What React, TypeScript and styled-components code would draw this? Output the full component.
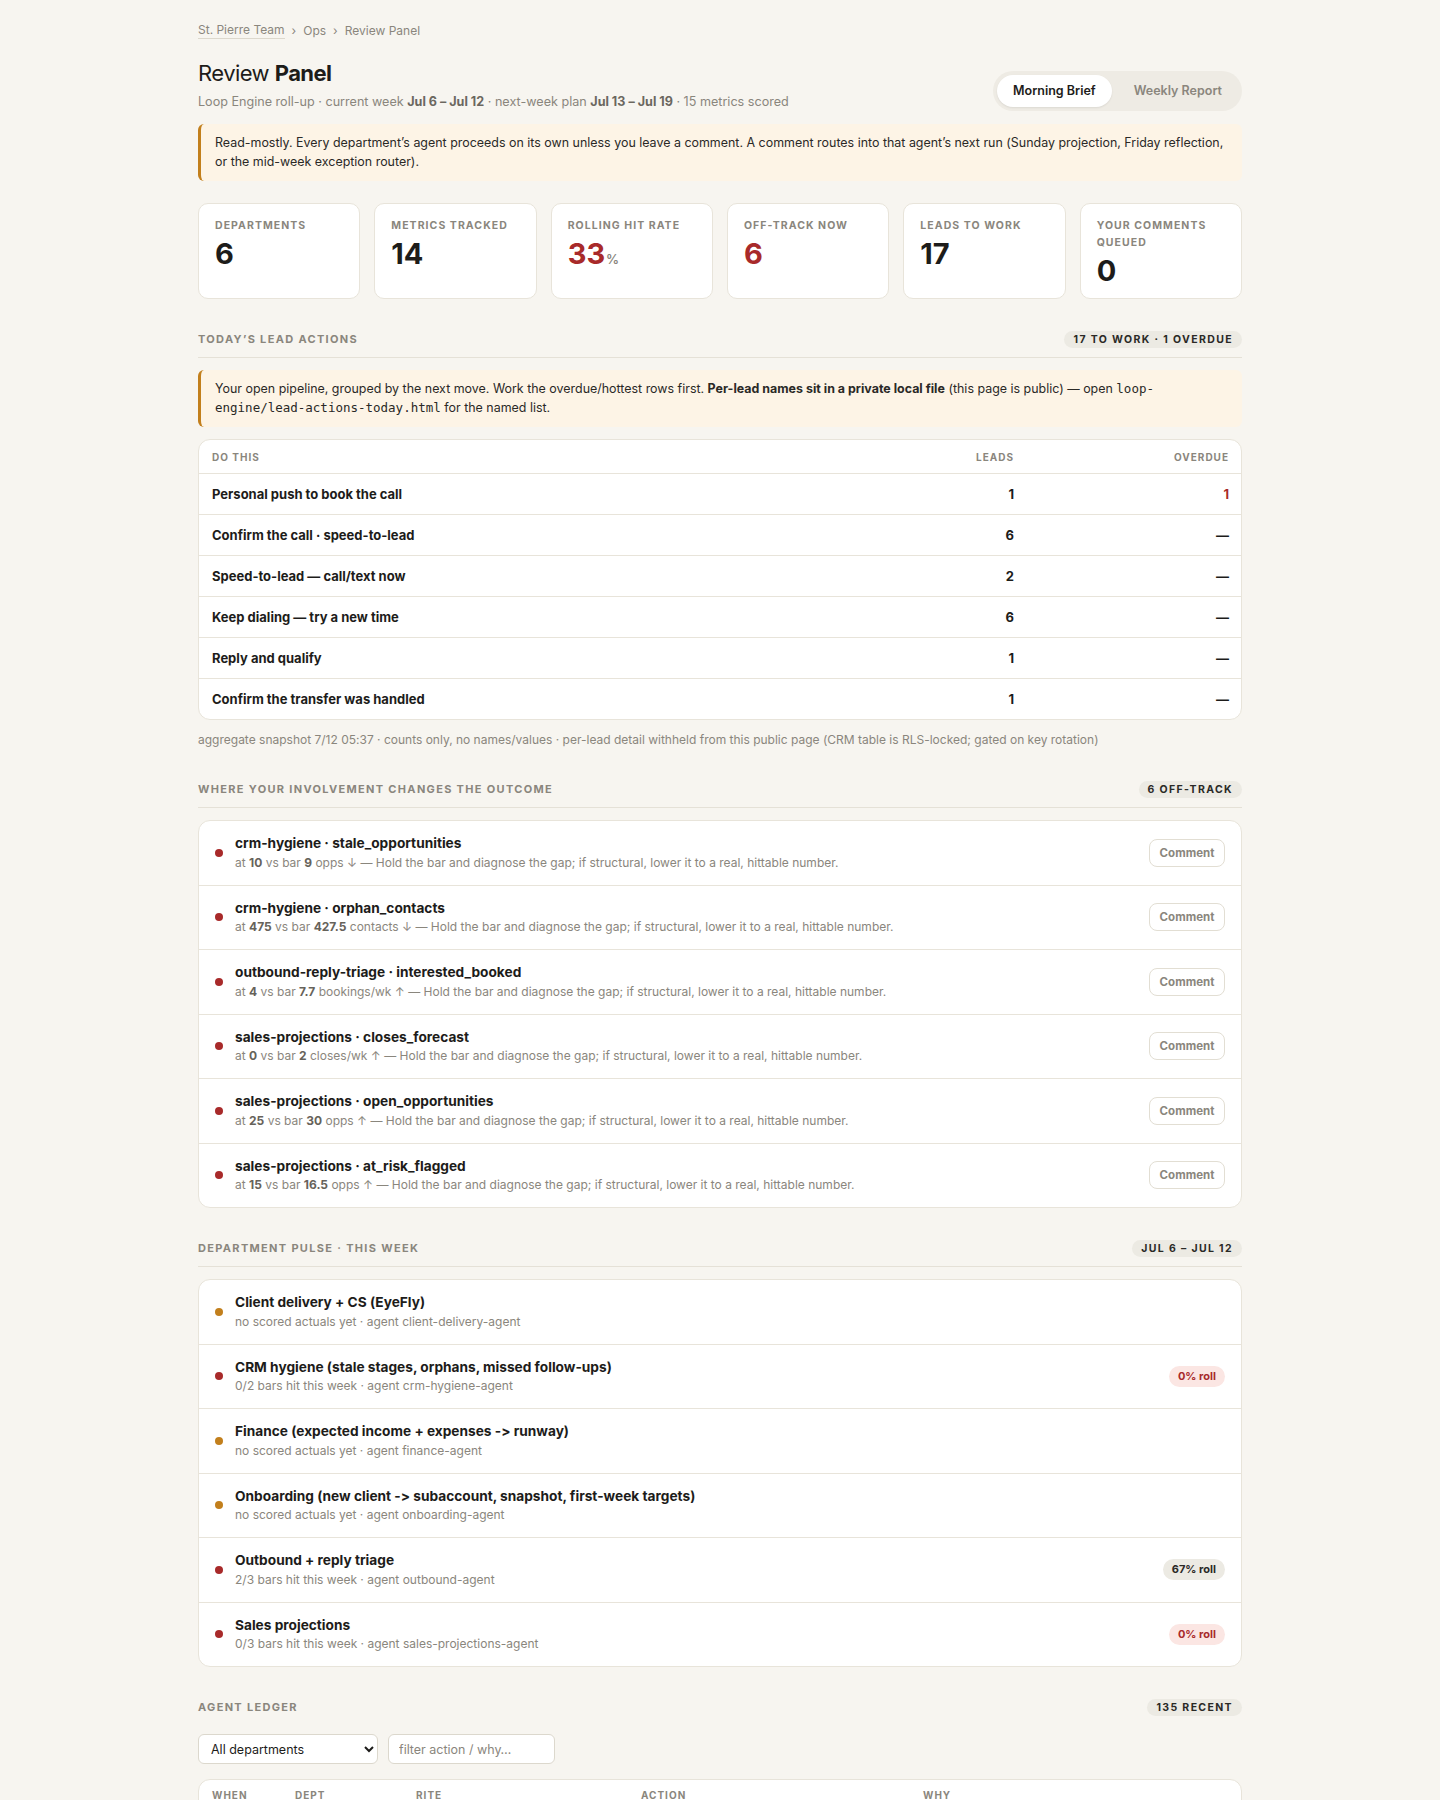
import React from "react";
import styled, { createGlobalStyle } from "styled-components";

const INK = "#1d1c1a";
const MUTED = "#8a867d";
const LINE = "#e8e4da";
const RED = "#a82a2a";
const AMBER = "#c27f1c";

const GlobalStyle = createGlobalStyle`
  body {
    margin: 0;
    background: #f7f5f0;
    color: ${INK};
    font-family: Inter, "Noto Sans", "Liberation Sans", sans-serif;
    font-feature-settings: "calt" 0;
    -webkit-font-smoothing: antialiased;
  }
`;

const Page = styled.div`
  max-width: 1044px;
  margin: 0 auto;
  padding: 22px 0 80px;
`;

const Crumbs = styled.nav`
  display: flex;
  align-items: center;
  gap: 7px;
  font-size: 12px;
  line-height: 16px;
  color: ${MUTED};
`;

const CrumbLink = styled.span`
  border-bottom: 1px solid #dcd8cd;
`;

const HeaderRow = styled.header`
  display: flex;
  align-items: flex-end;
  justify-content: space-between;
  margin-top: 20px;
`;

const Title = styled.h1`
  margin: 0;
  font-size: 22px;
  line-height: 28px;
  font-weight: 400;
  letter-spacing: -0.025em;

  b {
    font-weight: 700;
  }
`;

const Subtitle = styled.p`
  margin: 6px 0 0;
  font-size: 12.6px;
  line-height: 18px;
  color: ${MUTED};

  b {
    color: #6b675f;
    font-weight: 700;
  }
`;

const Toggle = styled.div`
  display: flex;
  gap: 6px;
  padding: 4px;
  background: #eeebe4;
  border-radius: 999px;
`;

const ToggleBtn = styled.button<{ $active?: boolean }>`
  border: 0;
  font: inherit;
  font-size: 12.5px;
  font-weight: 600;
  line-height: 18px;
  padding: 7px 16px;
  border-radius: 999px;
  cursor: pointer;
  color: ${(p) => (p.$active ? INK : MUTED)};
  background: ${(p) => (p.$active ? "#fff" : "transparent")};
  box-shadow: ${(p) => (p.$active ? "0 1px 2px rgba(0,0,0,0.08)" : "none")};
`;

const Callout = styled.div<{ $top?: number }>`
  margin-top: ${(p) => p.$top ?? 0}px;
  padding: 10px 14px;
  background: #fdf4e6;
  border-left: 3px solid ${AMBER};
  border-radius: 6px;
  font-size: 12.45px;
  line-height: 18.5px;
  color: #2a2926;

  b {
    font-weight: 700;
  }

  code {
    font-family: "DejaVu Sans Mono", "Liberation Mono", monospace;
    font-size: 12.5px;
  }
`;

const StatGrid = styled.div`
  display: grid;
  grid-template-columns: repeat(6, 1fr);
  gap: 14px;
  margin-top: 22px;
`;

const StatCard = styled.div`
  background: #fff;
  border: 1px solid ${LINE};
  border-radius: 10px;
  padding: 13px 16px 12px;
`;

const StatLabel = styled.div`
  font-size: 10.5px;
  line-height: 17px;
  font-weight: 700;
  letter-spacing: 0.1em;
  text-transform: uppercase;
  color: ${MUTED};
`;

const StatValue = styled.div<{ $alert?: boolean }>`
  margin-top: 4px;
  font-size: 29px;
  line-height: 31px;
  font-weight: 700;
  color: ${(p) => (p.$alert ? RED : INK)};

  small {
    font-size: 13px;
    font-weight: 600;
    color: ${MUTED};
    margin-left: 1px;
  }
`;

const Section = styled.section`
  margin-top: 32px;
`;

const SectionHead = styled.div<{ $flat?: boolean }>`
  display: flex;
  align-items: center;
  justify-content: space-between;
  padding-bottom: ${(p) => (p.$flat ? 0 : 9)}px;
  border-bottom: ${(p) => (p.$flat ? "none" : "1px solid #e5e1d7")};
  margin-bottom: ${(p) => (p.$flat ? 18 : 12)}px;
`;

const SectionTitle = styled.h2`
  margin: 0;
  font-size: 11px;
  line-height: 17px;
  font-weight: 700;
  letter-spacing: 0.12em;
  text-transform: uppercase;
  color: ${MUTED};
`;

const Badge = styled.span`
  font-size: 10.5px;
  line-height: 17px;
  font-weight: 700;
  letter-spacing: 0.13em;
  text-transform: uppercase;
  color: #2a2926;
  background: #eceae3;
  border-radius: 999px;
  padding: 0 9px;
`;

const Card = styled.div<{ $top?: number }>`
  margin-top: ${(p) => p.$top ?? 0}px;
  background: #fff;
  border: 1px solid ${LINE};
  border-radius: 12px;
  overflow: hidden;
`;

const LeadGrid = styled.div<{ $head?: boolean }>`
  display: grid;
  grid-template-columns: 1fr 140px 215px;
  align-items: center;
  padding: 0 12px 0 13px;
  height: ${(p) => (p.$head ? 33 : 40)}px;
  border-top: ${(p) => (p.$head ? "none" : `1px solid ${LINE}`)};
  font-size: ${(p) => (p.$head ? "10px" : "13px")};
  font-weight: 700;
  letter-spacing: ${(p) => (p.$head ? "0.1em" : "0")};
  text-transform: ${(p) => (p.$head ? "uppercase" : "none")};
  color: ${(p) => (p.$head ? MUTED : INK)};
`;

const Num = styled.span<{ $alert?: boolean }>`
  text-align: right;
  color: ${(p) => (p.$alert ? RED : "inherit")};
`;

const Footnote = styled.p`
  margin: 11px 0 0;
  font-size: 12px;
  line-height: 18px;
  color: ${MUTED};
`;

const ItemRow = styled.div`
  display: flex;
  align-items: center;
  gap: 12px;
  padding: 13px 16px;
  border-top: 1px solid ${LINE};

  &:first-child {
    border-top: none;
  }
`;

const Dot = styled.span<{ $tone: "red" | "amber" }>`
  flex: none;
  width: 8px;
  height: 8px;
  border-radius: 50%;
  background: ${(p) => (p.$tone === "red" ? RED : AMBER)};
`;

const ItemBody = styled.div`
  flex: 1;
  min-width: 0;
`;

const ItemTitle = styled.div`
  font-size: 13.7px;
  line-height: 19.5px;
  font-weight: 700;
  color: ${INK};
`;

const ItemSub = styled.div`
  font-size: 12px;
  line-height: 18px;
  color: ${MUTED};

  b {
    font-weight: 700;
    color: #66625a;
  }
`;

const CommentBtn = styled.button`
  flex: none;
  width: 76px;
  height: 28px;
  border: 1px solid #e2ded3;
  border-radius: 8px;
  background: #fff;
  font: inherit;
  font-size: 11.5px;
  font-weight: 700;
  color: ${MUTED};
  cursor: pointer;
`;

const RollPill = styled.span<{ $bad?: boolean }>`
  flex: none;
  font-size: 11px;
  line-height: 21px;
  font-weight: 700;
  padding: 0 9px;
  border-radius: 999px;
  color: ${(p) => (p.$bad ? RED : "#2a2926")};
  background: ${(p) => (p.$bad ? "#fbe6e3" : "#eceae3")};
`;

const Filters = styled.div`
  display: flex;
  gap: 10px;
`;

const Select = styled.select`
  width: 180px;
  height: 30px;
  padding: 0 8px;
  border: 1px solid #dcd8cd;
  border-radius: 6px;
  background: #fff;
  font: inherit;
  font-size: 12.5px;
  color: ${INK};
`;

const Search = styled.input`
  width: 167px;
  height: 30px;
  box-sizing: border-box;
  padding: 0 10px;
  border: 1px solid #dcd8cd;
  border-radius: 6px;
  background: #fff;
  font: inherit;
  font-size: 12.5px;

  &::placeholder {
    color: ${MUTED};
  }
`;

const LedgerTable = styled.table`
  width: 100%;
  border-collapse: collapse;
  font-size: 12.5px;

  th {
    text-align: left;
    padding: 9px 0 8px;
    font-size: 10px;
    font-weight: 700;
    letter-spacing: 0.1em;
    text-transform: uppercase;
    color: ${MUTED};
  }

  th:first-child,
  td:first-child {
    padding-left: 13px;
  }

  td {
    padding: 11px 12px 11px 0;
    border-top: 1px solid ${LINE};
    color: #3a3833;
    vertical-align: top;
  }
`;

const leadActions = [
  { action: "Personal push to book the call", leads: 1, overdue: 1 },
  { action: "Confirm the call · speed-to-lead", leads: 6, overdue: 0 },
  { action: "Speed-to-lead — call/text now", leads: 2, overdue: 0 },
  { action: "Keep dialing — try a new time", leads: 6, overdue: 0 },
  { action: "Reply and qualify", leads: 1, overdue: 0 },
  { action: "Confirm the transfer was handled", leads: 1, overdue: 0 },
];

const offTrack = [
  { dept: "crm-hygiene", metric: "stale_opportunities", at: "10", bar: "9", unit: "opps", dir: "↓" },
  { dept: "crm-hygiene", metric: "orphan_contacts", at: "475", bar: "427.5", unit: "contacts", dir: "↓" },
  { dept: "outbound-reply-triage", metric: "interested_booked", at: "4", bar: "7.7", unit: "bookings/wk", dir: "↑" },
  { dept: "sales-projections", metric: "closes_forecast", at: "0", bar: "2", unit: "closes/wk", dir: "↑" },
  { dept: "sales-projections", metric: "open_opportunities", at: "25", bar: "30", unit: "opps", dir: "↑" },
  { dept: "sales-projections", metric: "at_risk_flagged", at: "15", bar: "16.5", unit: "opps", dir: "↑" },
];

type Pulse = {
  name: string;
  detail: string;
  tone: "red" | "amber";
  roll?: string;
  bad?: boolean;
};

const pulse: Pulse[] = [
  { name: "Client delivery + CS (EyeFly)", detail: "no scored actuals yet · agent client-delivery-agent", tone: "amber" },
  { name: "CRM hygiene (stale stages, orphans, missed follow-ups)", detail: "0/2 bars hit this week · agent crm-hygiene-agent", tone: "red", roll: "0% roll", bad: true },
  { name: "Finance (expected income + expenses -> runway)", detail: "no scored actuals yet · agent finance-agent", tone: "amber" },
  { name: "Onboarding (new client -> subaccount, snapshot, first-week targets)", detail: "no scored actuals yet · agent onboarding-agent", tone: "amber" },
  { name: "Outbound + reply triage", detail: "2/3 bars hit this week · agent outbound-agent", tone: "red", roll: "67% roll" },
  { name: "Sales projections", detail: "0/3 bars hit this week · agent sales-projections-agent", tone: "red", roll: "0% roll", bad: true },
];

const ledger = [
  { when: "7/12 05:37", dept: "crm-hygiene", rite: "morning-brief", action: "flagged stale opportunities", why: "10 open past stage SLA" },
  { when: "7/12 05:31", dept: "outbound", rite: "morning-brief", action: "queued reply triage", why: "bookings below bar" },
  { when: "7/12 05:20", dept: "sales-proj", rite: "morning-brief", action: "re-scored open pipeline", why: "weekly roll-up" },
];

export default function App() {
  return (
    <>
      <GlobalStyle />
      <Page>
        <Crumbs>
          <CrumbLink>St. Pierre Team</CrumbLink>
          <span>›</span>
          <span>Ops</span>
          <span>›</span>
          <span>Review Panel</span>
        </Crumbs>

        <HeaderRow>
          <div>
            <Title>
              Review <b>Panel</b>
            </Title>
            <Subtitle>
              Loop Engine roll-up · current week <b>Jul 6 – Jul 12</b> · next-week plan{" "}
              <b>Jul 13 – Jul 19</b> · 15 metrics scored
            </Subtitle>
          </div>
          <Toggle>
            <ToggleBtn $active>Morning Brief</ToggleBtn>
            <ToggleBtn>Weekly Report</ToggleBtn>
          </Toggle>
        </HeaderRow>

        <Callout $top={13}>
          Read-mostly. Every department’s agent proceeds on its own unless you leave a comment. A
          comment routes into that agent’s next run (Sunday projection, Friday reflection, or the
          mid-week exception router).
        </Callout>

        <StatGrid>
          <StatCard>
            <StatLabel>Departments</StatLabel>
            <StatValue>6</StatValue>
          </StatCard>
          <StatCard>
            <StatLabel>Metrics tracked</StatLabel>
            <StatValue>14</StatValue>
          </StatCard>
          <StatCard>
            <StatLabel>Rolling hit rate</StatLabel>
            <StatValue $alert>
              33<small>%</small>
            </StatValue>
          </StatCard>
          <StatCard>
            <StatLabel>Off-track now</StatLabel>
            <StatValue $alert>6</StatValue>
          </StatCard>
          <StatCard>
            <StatLabel>Leads to work</StatLabel>
            <StatValue>17</StatValue>
          </StatCard>
          <StatCard>
            <StatLabel>Your comments queued</StatLabel>
            <StatValue>0</StatValue>
          </StatCard>
        </StatGrid>

        <Section>
          <SectionHead>
            <SectionTitle>Today’s lead actions</SectionTitle>
            <Badge>17 to work · 1 overdue</Badge>
          </SectionHead>
          <Callout>
            Your open pipeline, grouped by the next move. Work the overdue/hottest rows first.{" "}
            <b>Per-lead names sit in a private local file</b> (this page is public) — open{" "}
            <code>loop-engine/lead-actions-today.html</code> for the named list.
          </Callout>
          <Card $top={12}>
            <LeadGrid $head>
              <span>Do this</span>
              <Num>Leads</Num>
              <Num>Overdue</Num>
            </LeadGrid>
            {leadActions.map((row) => (
              <LeadGrid key={row.action}>
                <span>{row.action}</span>
                <Num>{row.leads}</Num>
                <Num $alert={row.overdue > 0}>{row.overdue > 0 ? row.overdue : "—"}</Num>
              </LeadGrid>
            ))}
          </Card>
          <Footnote>
            aggregate snapshot 7/12 05:37 · counts only, no names/values · per-lead detail withheld
            from this public page (CRM table is RLS-locked; gated on key rotation)
          </Footnote>
        </Section>

        <Section>
          <SectionHead>
            <SectionTitle>Where your involvement changes the outcome</SectionTitle>
            <Badge>6 off-track</Badge>
          </SectionHead>
          <Card>
            {offTrack.map((m) => (
              <ItemRow key={m.metric}>
                <Dot $tone="red" />
                <ItemBody>
                  <ItemTitle>
                    {m.dept} · {m.metric}
                  </ItemTitle>
                  <ItemSub>
                    at <b>{m.at}</b> vs bar <b>{m.bar}</b> {m.unit} {m.dir} — Hold the bar and
                    diagnose the gap; if structural, lower it to a real, hittable number.
                  </ItemSub>
                </ItemBody>
                <CommentBtn>Comment</CommentBtn>
              </ItemRow>
            ))}
          </Card>
        </Section>

        <Section>
          <SectionHead>
            <SectionTitle>Department pulse · this week</SectionTitle>
            <Badge>Jul 6 – Jul 12</Badge>
          </SectionHead>
          <Card>
            {pulse.map((d) => (
              <ItemRow key={d.name}>
                <Dot $tone={d.tone} />
                <ItemBody>
                  <ItemTitle>{d.name}</ItemTitle>
                  <ItemSub>{d.detail}</ItemSub>
                </ItemBody>
                {d.roll && <RollPill $bad={d.bad}>{d.roll}</RollPill>}
              </ItemRow>
            ))}
          </Card>
        </Section>

        <Section>
          <SectionHead $flat>
            <SectionTitle>Agent ledger</SectionTitle>
            <Badge>135 recent</Badge>
          </SectionHead>
          <Filters>
            <Select defaultValue="all">
              <option value="all">All departments</option>
              <option value="crm">crm-hygiene</option>
              <option value="sales">sales-projections</option>
            </Select>
            <Search placeholder="filter action / why…" />
          </Filters>
          <Card $top={15}>
            <LedgerTable>
              <colgroup>
                <col style={{ width: 96 }} />
                <col style={{ width: 121 }} />
                <col style={{ width: 225 }} />
                <col style={{ width: 282 }} />
                <col />
              </colgroup>
              <thead>
                <tr>
                  <th>When</th>
                  <th>Dept</th>
                  <th>Rite</th>
                  <th>Action</th>
                  <th>Why</th>
                </tr>
              </thead>
              <tbody>
                {ledger.map((r) => (
                  <tr key={r.when}>
                    <td>{r.when}</td>
                    <td>{r.dept}</td>
                    <td>{r.rite}</td>
                    <td>{r.action}</td>
                    <td>{r.why}</td>
                  </tr>
                ))}
              </tbody>
            </LedgerTable>
          </Card>
        </Section>
      </Page>
    </>
  );
}
